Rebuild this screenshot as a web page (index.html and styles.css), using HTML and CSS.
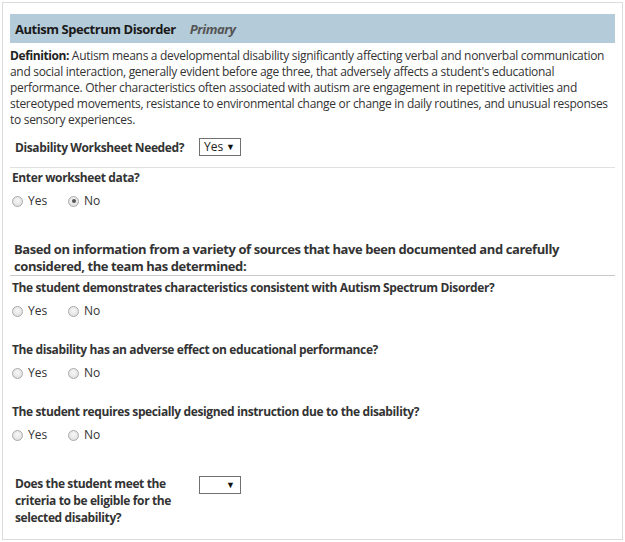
FILE: index.html
```html
<!DOCTYPE html>
<html>
<head>
<meta charset="utf-8">
<link rel="stylesheet" href="styles.css">
</head>
<body>
<div class="panel">
  <div class="head"><span class="title">Autism Spectrum Disorder</span><span class="tag">Primary</span></div>
  <p class="def"><b>Definition:</b> Autism means a developmental disability significantly affecting verbal and nonverbal communication and social interaction, generally evident before age three, that adversely affects a student's educational performance. Other characteristics often associated with autism are engagement in repetitive activities and stereotyped movements, resistance to environmental change or change in daily routines, and unusual responses to sensory experiences.</p>
  <div class="field ws">
    <span class="flabel">Disability Worksheet Needed?</span>
    <span class="sel"><span class="val">Yes</span><span class="arr">&#9660;</span></span>
  </div>
  <hr class="rule">
  <div class="q">Enter worksheet data?</div>
  <div class="radios">
    <label class="opt"><input type="radio" name="ws">Yes</label>
    <label class="opt"><input type="radio" name="ws" checked>No</label>
  </div>
  <div class="based">Based on information from a variety of sources that have been documented and carefully considered, the team has determined:</div>
  <hr class="rule dark">
  <div class="q first">The student demonstrates characteristics consistent with Autism Spectrum Disorder?</div>
  <div class="radios">
    <label class="opt"><input type="radio" name="q1">Yes</label>
    <label class="opt"><input type="radio" name="q1">No</label>
  </div>
  <div class="q next">The disability has an adverse effect on educational performance?</div>
  <div class="radios">
    <label class="opt"><input type="radio" name="q2">Yes</label>
    <label class="opt"><input type="radio" name="q2">No</label>
  </div>
  <div class="q next">The student requires specially designed instruction due to the disability?</div>
  <div class="radios">
    <label class="opt"><input type="radio" name="q3">Yes</label>
    <label class="opt"><input type="radio" name="q3">No</label>
  </div>
  <div class="field elig">
    <span class="flabel">Does the student meet the criteria to be eligible for the selected disability?</span>
    <span class="sel"><span class="val"></span><span class="arr">&#9660;</span></span>
  </div>
</div>
</body>
</html>
```
FILE: styles.css
```css
html, body {
  margin: 0;
  padding: 0;
  background: #fff;
}
body {
  font-family: "Open Sans", "Liberation Sans", sans-serif;
  font-size: 12px;
  color: #333;
}
.panel {
  margin: 2px;
  border: 1px solid #dcdcdc;
  padding: 11px 7px 0 7px;
  height: 538px;
  box-sizing: border-box;
}
.head {
  height: 29px;
  background: #b4cbd9;
  display: flex;
  align-items: center;
  padding-left: 5px;
  font-size: 13px;
  font-weight: 700;
  letter-spacing: -0.45px;
}
.title {
  color: #1a1a1a;
}
.tag {
  color: #555;
  font-style: italic;
  margin-left: 14px;
}
.def {
  margin: 5px 0 0 0;
  line-height: 16px;
  color: #333;
  letter-spacing: -0.3px;
}
.def b {
  color: #222;
  font-weight: 700;
  letter-spacing: -0.4px;
}
.field {
  display: grid;
  grid-template-columns: 184px auto;
  align-items: center;
  padding-left: 5px;
  font-weight: 700;
  letter-spacing: -0.38px;
  color: #333;
}
.ws {
  margin-top: 9px;
  height: 20px;
}
.elig {
  margin-top: 32px;
  align-items: start;
  line-height: 17px;
}
.elig .flabel {
  width: 168px;
}
.sel {
  display: flex;
  align-items: center;
  justify-content: space-between;
  width: 42px;
  height: 18px;
  box-sizing: border-box;
  border: 1px solid #707070;
  padding: 0 5px 0 4px;
  font-weight: normal;
  letter-spacing: 0;
  color: #222;
  line-height: 16px;
}
.elig .sel {
  margin-top: 1px;
}
.arr {
  font-size: 9px;
  color: #111;
}
.rule {
  border: 0;
  border-top: 1px solid #e0e0e0;
  margin: 10px 0 0 0;
  height: 0;
}
.rule.dark {
  border-top-color: #c8c8c8;
  margin: 0;
}
.q {
  margin-top: 2px;
  padding-left: 2px;
  line-height: 16px;
  font-weight: 700;
  letter-spacing: -0.38px;
  color: #333;
}
.q.first {
  margin-top: 4px;
}
.q.next {
  margin-top: 23px;
}
.radios {
  margin-top: 7px;
  height: 16px;
  padding-left: 2px;
  display: flex;
  align-items: center;
}
.opt {
  display: inline-flex;
  align-items: center;
  gap: 5px;
  width: 56px;
  line-height: 16px;
  color: #333;
}
.opt input {
  appearance: none;
  -webkit-appearance: none;
  margin: 0;
  width: 11px;
  height: 11px;
  border-radius: 50%;
  border: 1px solid #a9a9a9;
  background: radial-gradient(circle at 50% 40%, #f7f7f7 0%, #e6e6e6 60%, #d4d4d4 100%);
  box-sizing: border-box;
  position: relative;
}
.opt input:checked::after {
  content: "";
  position: absolute;
  left: 2.5px;
  top: 2.5px;
  width: 4px;
  height: 4px;
  border-radius: 50%;
  background: #555;
}
.based {
  margin-top: 32px;
  padding-left: 4px;
  font-size: 13px;
  font-weight: 700;
  letter-spacing: -0.42px;
  line-height: 17px;
  color: #333;
}
```
